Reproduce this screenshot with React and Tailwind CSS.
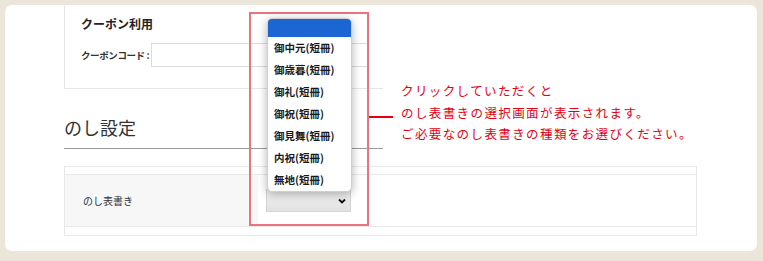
import React from "react";

const items = ["御中元(短冊)", "御歳暮(短冊)", "御礼(短冊)", "御祝(短冊)", "御見舞(短冊)", "内祝(短冊)", "無地(短冊)"];

export default function App() {
  return (
    <div
      className="relative w-[763px] h-[261px] bg-[#ece5da] pt-[5px] pl-[5px] overflow-hidden"
      style={{ fontFamily: '"Noto Sans CJK JP", "Noto Sans", sans-serif' }}
    >
      <div className="w-[752px] h-[246px] bg-white rounded-[7px] pl-[59px] overflow-hidden">
        {/* coupon box */}
        <div className="w-[319px] h-[84px] border-l border-b border-[#e6e6e6] pl-[16px] pt-[11px]">
          <div className="text-[12px] leading-[16px] font-bold text-[#222]">クーポン利用</div>
          <div className="flex items-center mt-[11px]">
            <div className="w-[70px] shrink-0 whitespace-nowrap text-[9.5px] font-semibold text-[#333] leading-[14px] tracking-[-0.4px]">クーポンコード :</div>
            <div className="w-[218px] h-[24px] shrink-0 border border-[#dcdcdc] bg-white"></div>
          </div>
        </div>
        {/* heading */}
        <div className="w-[319px] mt-[26px] border-b border-[#9a9a9a] pb-[9px]">
          <div className="text-[18px] leading-[24px] text-[#333]">のし設定</div>
        </div>
        {/* table */}
        <div className="w-[633px] mt-[17px] border border-[#e8e8e8]">
          <div className="h-[7px]"></div>
          <div className="flex h-[53px] border-y border-[#e8e8e8]">
            <div className="w-[193px] bg-[#f7f7f7] flex items-center pl-[18px] text-[10px] text-[#333]">のし表書き</div>
            <div className="flex items-center pl-[8px]">
              <div className="w-[85px] h-[23px] border border-[#d4d4d4] bg-gradient-to-b from-[#f2f2f2] to-[#e2e2e2] flex items-center justify-end pr-[4px]">
                <svg width="8" height="6" viewBox="0 0 8 6">
                  <path d="M1 1.5 L4 4.5 L7 1.5" fill="none" stroke="#111" strokeWidth="1.8" />
                </svg>
              </div>
            </div>
          </div>
          <div className="h-[8px]"></div>
        </div>
      </div>

      {/* red annotation box */}
      <div className="absolute left-[249px] top-[12px] w-[120px] h-[214px] border-2 border-[#ea737e]"></div>

      {/* dropdown */}
      <div className="absolute left-[267px] top-[18px] w-[85px] rounded-[5px] bg-white shadow-[0_2px_10px_rgba(0,0,0,0.3)] overflow-hidden border border-[#cfcfcf]">
        <div className="h-[18px] bg-[#1b66d3]"></div>
        {items.map((t) => (
          <div key={t} className="h-[22px] flex items-center pl-[6px] text-[10.5px] font-semibold text-[#1a1a1a]">
            {t}
          </div>
        ))}
      </div>

      {/* red connector line */}
      <div className="absolute left-[369px] top-[116px] w-[24px] h-[2px] bg-[#e60012]"></div>

      {/* red annotation text */}
      <div className="absolute left-[401px] top-[80px] text-[12.5px] leading-[21.5px] tracking-[1.4px] text-[#e60012] whitespace-nowrap">
        <div>クリックしていただくと</div>
        <div>のし表書きの選択画面が表示されます。</div>
        <div>ご必要なのし表書きの種類をお選びください。</div>
      </div>
    </div>
  );
}
